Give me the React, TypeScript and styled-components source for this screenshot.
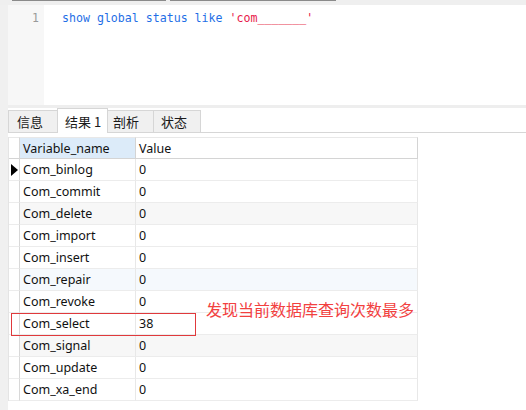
import React from "react";
import styled, { createGlobalStyle } from "styled-components";

const GlobalStyle = createGlobalStyle`
  html, body { margin: 0; padding: 0; background: #ffffff; }
  body { width: 526px; height: 410px; overflow: hidden; }
  #root { width: 526px; height: 410px; }
`;

const Page = styled.div`
  display: flex;
  flex-direction: column;
  width: 526px;
  height: 410px;
  background: #ffffff;
`;

const TopBar = styled.div`
  display: flex;
  align-items: flex-start;
  height: 5px;
  background: #efefef;
  flex: none;
`;

const TopSeg = styled.div<{ $w: number; $ml: number }>`
  width: ${(p) => p.$w}px;
  margin-left: ${(p) => p.$ml}px;
  height: 1px;
  background: #8a8a8a;
`;

const Body = styled.div`
  display: flex;
  flex: 1;
  min-height: 0;
`;

const LeftRail = styled.div`
  width: 8px;
  flex: none;
  background: #f0f0f0;
`;

const Main = styled.div`
  flex: 1;
  display: flex;
  flex-direction: column;
  min-width: 0;
`;

const Editor = styled.div`
  display: flex;
  height: 100px;
  flex: none;
`;

const Gutter = styled.div`
  width: 36px;
  background: #f7f7f7;
  text-align: right;
  padding: 5px 5px 0 0;
  box-sizing: border-box;
  font-family: "DejaVu Sans Mono", monospace;
  font-size: 11.5px;
  line-height: 16px;
  color: #9a9a9a;
`;

const Code = styled.div`
  flex: 1;
  padding: 5px 0 0 18px;
  font-family: "DejaVu Sans Mono", monospace;
  font-size: 11.6px;
  line-height: 16px;
  color: #1f6fe6;
  white-space: pre;
`;

const Str = styled.span`
  color: #e8194a;
`;

const Separator = styled.div`
  height: 3px;
  background: #eeeeee;
  flex: none;
`;

const TabBar = styled.div`
  display: flex;
  align-items: flex-end;
  height: 24px;
  border-bottom: 1px solid #d6d6d6;
  flex: none;
`;

const Tab = styled.div<{ $w: number; $pl: number; $active?: boolean }>`
  width: ${(p) => p.$w}px;
  height: ${(p) => (p.$active ? 25 : 22)}px;
  margin-bottom: ${(p) => (p.$active ? -1 : 0)}px;
  box-sizing: border-box;
  padding-left: ${(p) => p.$pl}px;
  border: 1px solid #d6d6d6;
  border-bottom: none;
  margin-right: -1px;
  background: ${(p) => (p.$active ? "#ffffff" : "#f0f0f0")};
  position: relative;
  z-index: ${(p) => (p.$active ? 1 : 0)};
  display: flex;
  align-items: ${(p) => (p.$active ? "flex-start" : "center")};
  padding-top: ${(p) => (p.$active ? 3 : 0)}px;
  font-family: "Noto Sans CJK SC", "Noto Sans", sans-serif;
  font-size: 13px;
  color: #1a1a1a;
`;

const GridWrap = styled.div`
  position: relative;
  margin-top: 4px;
  width: 409px;
`;

const Grid = styled.div`
  display: grid;
  grid-template-columns: 11px 116px 282px;
  grid-auto-rows: 22px;
  border-left: 1px solid #e4e4e4;
  box-sizing: border-box;
  font-family: "Noto Sans", "Open Sans", sans-serif;
  font-size: 12.5px;
  color: #111111;
`;

const Cell = styled.div<{ $bg?: string; $head?: boolean }>`
  box-sizing: border-box;
  background: ${(p) => p.$bg || "transparent"};
  border-right: 1px solid ${(p) => (p.$head ? "#d4d4d4" : "#e8e8e8")};
  border-bottom: 1px solid ${(p) => (p.$head ? "#d4d4d4" : "#ececec")};
  border-top: ${(p) => (p.$head ? "1px solid #e8e8e8" : "none")};
  padding-left: 3px;
  display: flex;
  align-items: center;
  white-space: nowrap;
  overflow: hidden;
`;

const IndCell = styled.div<{ $head?: boolean }>`
  box-sizing: border-box;
  border-right: 1px solid #d8d8d8;
  border-bottom: 1px solid ${(p) => (p.$head ? "#d4d4d4" : "#ececec")};
  border-top: ${(p) => (p.$head ? "1px solid #e8e8e8" : "none")};
  display: flex;
  align-items: center;
  justify-content: center;
`;

const Arrow = styled.div`
  width: 0;
  height: 0;
  border-top: 6px solid transparent;
  border-bottom: 6px solid transparent;
  border-left: 7px solid #000000;
  margin-left: 1px;
`;

const RedBox = styled.div`
  position: absolute;
  left: 3px;
  top: 176px;
  width: 185px;
  height: 23px;
  box-sizing: border-box;
  border: 1px solid #e0393c;
  pointer-events: none;
`;

const Note = styled.div`
  position: absolute;
  left: 198px;
  top: 162px;
  font-family: "Noto Sans CJK SC", sans-serif;
  font-size: 16px;
  line-height: 20px;
  color: #f2413f;
  white-space: nowrap;
`;

const rows: { name: string; value: string; bg?: string }[] = [
  { name: "Com_binlog", value: "0" },
  { name: "Com_commit", value: "0" },
  { name: "Com_delete", value: "0", bg: "#f7f7f7" },
  { name: "Com_import", value: "0" },
  { name: "Com_insert", value: "0" },
  { name: "Com_repair", value: "0", bg: "#f5f9fd" },
  { name: "Com_revoke", value: "0" },
  { name: "Com_select", value: "38" },
  { name: "Com_signal", value: "0", bg: "#f7f7f7" },
  { name: "Com_update", value: "0" },
  { name: "Com_xa_end", value: "0" },
];

export default function App() {
  return (
    <>
      <GlobalStyle />
      <Page>
        <TopBar>
          <TopSeg $w={154} $ml={12} />
          <TopSeg $w={166} $ml={4} />
        </TopBar>
        <Body>
          <LeftRail />
          <Main>
            <Editor>
              <Gutter>1</Gutter>
              <Code>
                show global status like <Str>'com_______'</Str>
              </Code>
            </Editor>
            <Separator />
            <TabBar>
              <Tab $w={50} $pl={8}>信息</Tab>
              <Tab $w={51} $pl={7} $active>结果 1</Tab>
              <Tab $w={47} $pl={5}>剖析</Tab>
              <Tab $w={48} $pl={7}>状态</Tab>
            </TabBar>
            <GridWrap>
              <Grid>
                <IndCell $head />
                <Cell $head $bg="#dcebf9">Variable_name</Cell>
                <Cell $head>Value</Cell>
                {rows.map((r, i) => (
                  <React.Fragment key={r.name}>
                    <IndCell>{i === 0 ? <Arrow /> : null}</IndCell>
                    <Cell $bg={r.bg}>{r.name}</Cell>
                    <Cell $bg={r.bg}>{r.value}</Cell>
                  </React.Fragment>
                ))}
              </Grid>
              <RedBox />
              <Note>发现当前数据库查询次数最多</Note>
            </GridWrap>
          </Main>
        </Body>
      </Page>
    </>
  );
}
